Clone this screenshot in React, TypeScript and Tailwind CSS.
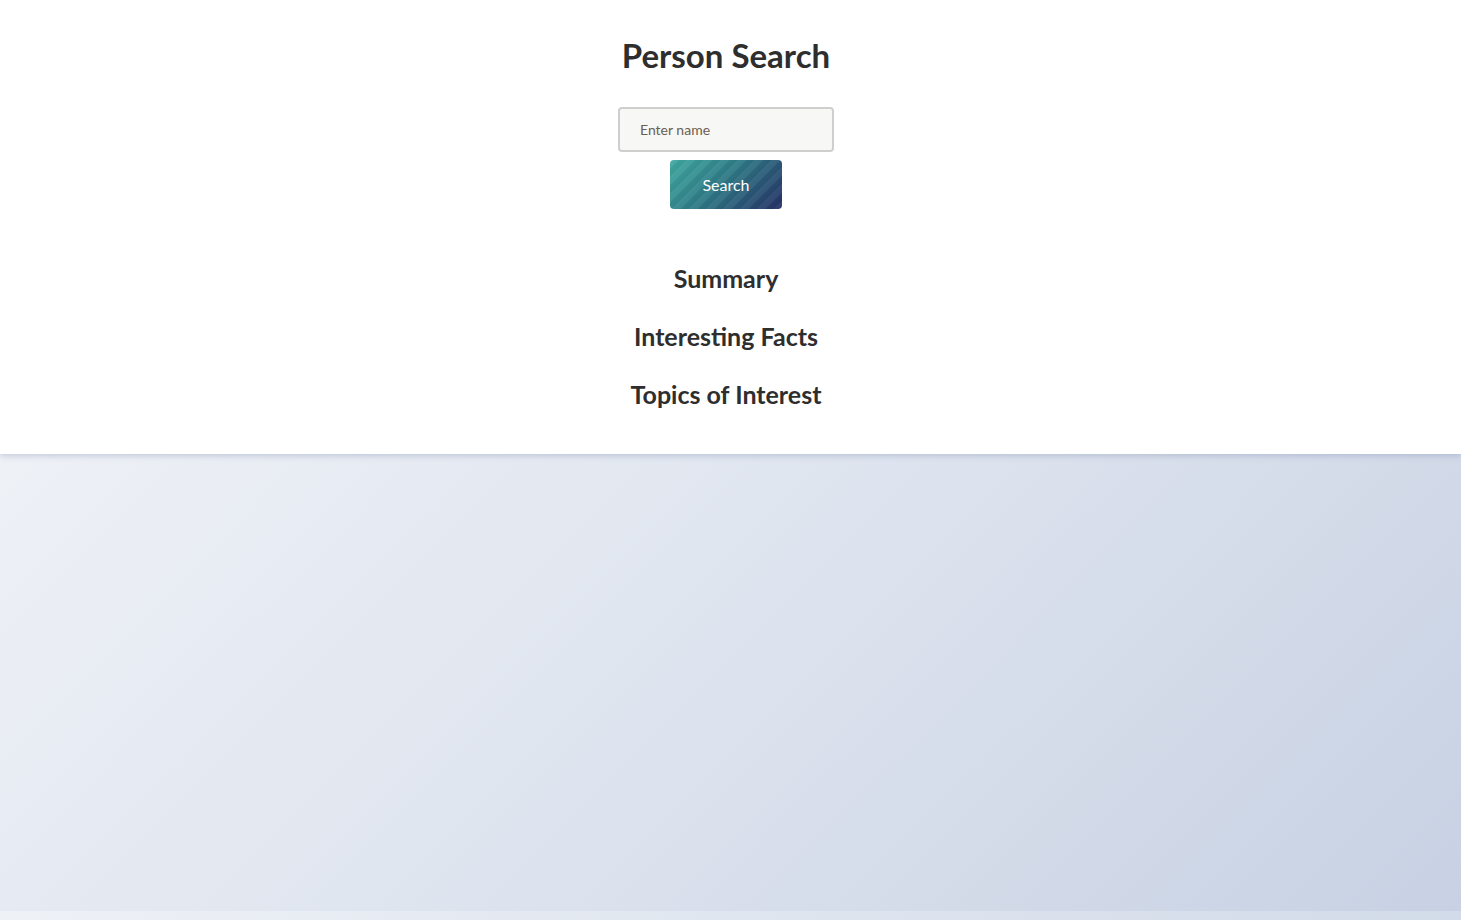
import { useState } from 'react'

export default function App() {
  const [name, setName] = useState('')

  return (
    <div className="min-h-[920px] flex flex-col font-['Lato','Noto_Sans',sans-serif] text-[#2e2e2e]">
      {/* Top panel */}
      <div className="relative z-10 h-[454px] bg-white shadow-[0_2px_6px_rgba(120,135,170,0.35)] flex flex-col items-center pt-[33px] pr-[9px]">
        <h1 className="text-[33px] font-bold leading-[44px]">Person Search</h1>

        <input
          value={name}
          onChange={(e) => setName(e.target.value)}
          placeholder="Enter name"
          className="mt-[30px] w-[216px] h-[45px] rounded-[4px] border-2 border-[#cfcfcf] bg-[#f7f7f5] px-[20px] text-[14px] text-[#333] placeholder:text-[#6b5d50] outline-none"
        />

        <button className="mt-[8px] w-[112px] h-[49px] rounded-[4px] text-white text-[16px] bg-[repeating-linear-gradient(135deg,rgba(255,255,255,0.05)_0px,rgba(255,255,255,0.05)_6px,rgba(0,0,0,0.03)_6px,rgba(0,0,0,0.03)_12px),linear-gradient(135deg,#40aaa0_0%,#2f7a86_45%,#253065_100%)]">
          Search
        </button>

        <div className="mt-[52px] flex flex-col items-center gap-[24px]">
          <h2 className="text-[25px] font-bold leading-[34px]">Summary</h2>
          <h2 className="text-[25px] font-bold leading-[34px]">Interesting Facts</h2>
          <h2 className="text-[25px] font-bold leading-[34px]">Topics of Interest</h2>
        </div>
      </div>
      <div className="flex-1 bg-[linear-gradient(135deg,#eef1f6_0%,#dde3ee_50%,#c7d1e3_100%)]" />
      <div className="h-[9px] bg-[linear-gradient(90deg,#eef1f6_0%,#d2dbe9_100%)]" />
    </div>
  )
}
